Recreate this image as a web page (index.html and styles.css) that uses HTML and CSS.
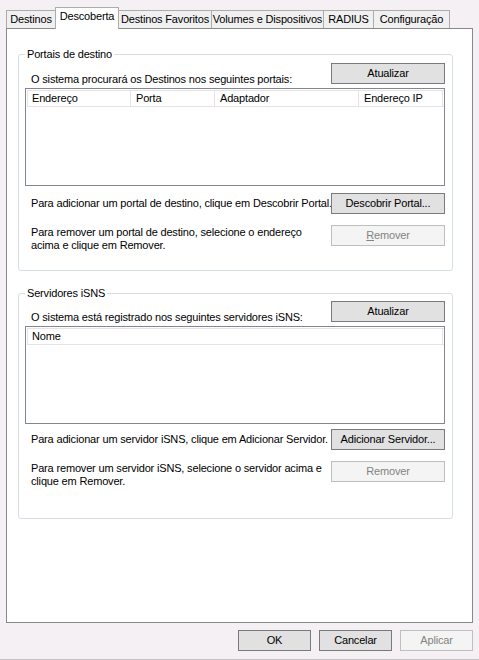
FILE: index.html
```html
<!DOCTYPE html>
<html lang="pt-BR">
<head>
<meta charset="utf-8">
<title>Propriedades do Iniciador iSCSI</title>
<link rel="stylesheet" href="styles.css">
</head>
<body>
<div class="dialog">
  <div class="tabs">
    <div class="tab t-destinos">Destinos</div>
    <div class="tab t-descoberta active">Descoberta</div>
    <div class="tab t-favoritos">Destinos Favoritos</div>
    <div class="tab t-volumes">Volumes e Dispositivos</div>
    <div class="tab t-radius">RADIUS</div>
    <div class="tab t-config">Configuração</div>
  </div>

  <div class="panel">
    <fieldset class="group g-portais">
      <legend>Portais de destino</legend>
      <div class="head-row">
        <span class="label head-label">O sistema procurará os Destinos nos seguintes portais:</span>
        <button class="btn">Atualizar</button>
      </div>
      <div class="list">
        <div class="list-header">
          <div class="col c-end">Endereço</div>
          <div class="col c-porta">Porta</div>
          <div class="col c-adapt">Adaptador</div>
          <div class="col c-ip">Endereço IP</div>
        </div>
      </div>
      <div class="action-row first">
        <span class="label">Para adicionar um portal de destino, clique em Descobrir Portal.</span>
        <button class="btn">Descobrir Portal...</button>
      </div>
      <div class="action-row second">
        <span class="label multi">Para remover um portal de destino, selecione o endereço<br>acima e clique em Remover.</span>
        <button class="btn disabled"><u>R</u>emover</button>
      </div>
    </fieldset>

    <fieldset class="group g-isns">
      <legend>Servidores iSNS</legend>
      <div class="head-row">
        <span class="label head-label">O sistema está registrado nos seguintes servidores iSNS:</span>
        <button class="btn">Atualizar</button>
      </div>
      <div class="list">
        <div class="list-header">
          <div class="col c-nome">Nome</div>
        </div>
      </div>
      <div class="action-row first">
        <span class="label">Para adicionar um servidor iSNS, clique em Adicionar Servidor.</span>
        <button class="btn">Adicionar Servidor...</button>
      </div>
      <div class="action-row second">
        <span class="label multi">Para remover um servidor iSNS, selecione o servidor acima e<br>clique em Remover.</span>
        <button class="btn disabled">Remover</button>
      </div>
    </fieldset>
  </div>

  <div class="footer">
    <button class="btn foot">OK</button>
    <button class="btn foot">Cancelar</button>
    <button class="btn foot disabled">Aplicar</button>
  </div>
</div>
</body>
</html>
```

FILE: styles.css
```css
* {
  box-sizing: border-box;
}

html, body {
  margin: 0;
  padding: 0;
}

body {
  background: #f4f0f4;
  font-family: "Liberation Sans", Arial, sans-serif;
  font-size: 11px;
  letter-spacing: -0.17px;
  line-height: 13px;
  color: #000;
}

.dialog {
  height: 660px;
  border-bottom: 1px solid #c4c4c4;
  display: flex;
  flex-direction: column;
}

/* Tabs */
.tabs {
  display: flex;
  align-items: flex-end;
  height: 21px;
  margin-top: 7px;
  padding-left: 6px;
}

.tab {
  height: 18px;
  border: 1px solid #acacac;
  border-bottom: none;
  background: #f0f0f0;
  text-align: center;
  line-height: 16px;
  margin-left: -1px;
  white-space: nowrap;
}

.tab:first-child {
  margin-left: 0;
}

.tab.active {
  position: relative;
  z-index: 2;
  height: 22px;
  margin-bottom: -1px;
  background: #fff;
}

.t-destinos { width: 50px; }
.t-descoberta { width: 64px; }
.t-favoritos { width: 94px; }
.t-volumes { width: 113px; }
.t-radius { width: 51px; }
.t-config { width: 77px; }

/* Panel */
.panel {
  margin: 0 6px;
  height: 595px;
  background: #fff;
  border: 1px solid #898989;
  padding: 18px 19px 0 11px;
}

.group {
  margin: 0;
  min-width: 0;
  border: 1px solid #d5dde5;
  border-radius: 3px;
  padding: 0 7px 18px 6px;
}

.group legend {
  padding: 0 2px;
  line-height: 14px;
}

.g-isns {
  margin-top: 15px;
  padding-bottom: 30px;
}

.head-row {
  display: flex;
  justify-content: space-between;
  align-items: flex-start;
  margin-top: 2px;
}

.g-isns .head-row {
  margin-top: 1px;
}

.label {
  flex: 1 1 auto;
  min-width: 0;
  padding-left: 6px;
  white-space: nowrap;
}

.head-label {
  padding-top: 10px;
}

.list {
  margin-top: 2px;
  height: 98px;
  border: 1px solid #828790;
  background: #fff;
}

.list-header {
  display: flex;
  height: 17px;
  margin: 1px 0 0 1px;
  border: 1px solid #e6e2e6;
  border-right: none;
}

.col {
  border-right: 1px solid #e6e2e6;
  padding-left: 5px;
  line-height: 15px;
  white-space: nowrap;
}

.c-end { width: 103px; padding-left: 4px; }
.c-porta { width: 84px; }
.c-adapt { width: 144px; }
.c-ip { width: 84px; }
.c-nome { width: 415px; padding-left: 4px; }

.action-row {
  display: flex;
  justify-content: space-between;
}

.action-row.first {
  align-items: center;
  margin-top: 7px;
}

.g-isns .action-row.first {
  margin-top: 5px;
}

.action-row.second {
  align-items: flex-start;
  margin-top: 11px;
}

.multi {
  padding-top: 1px;
}

/* Buttons */
.btn {
  flex: none;
  width: 114px;
  height: 21px;
  padding: 0;
  margin: 0;
  border: 1px solid #7a7a7a;
  border-radius: 0;
  background: #e1e1e1;
  font-family: inherit;
  font-size: 11px;
  letter-spacing: -0.17px;
  line-height: 13px;
  color: #000;
}

.btn.disabled {
  background: #f4f4f4;
  border-color: #bfbfbf;
  color: #838383;
}

.footer {
  display: flex;
  justify-content: flex-end;
  gap: 8px;
  padding: 7px 6px 0 0;
}

.btn.foot {
  width: 73px;
}
```
